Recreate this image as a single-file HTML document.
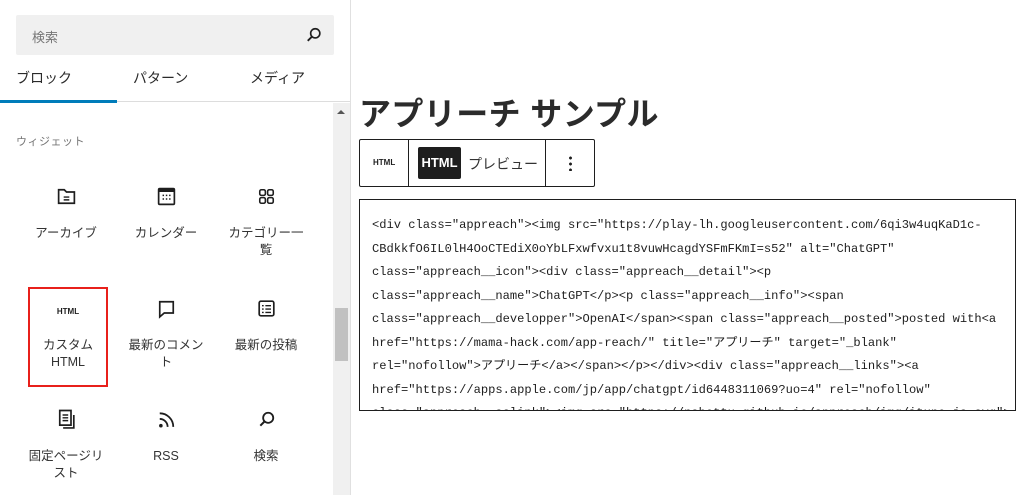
<!DOCTYPE html>
<html><head><meta charset="utf-8"><style>
*{box-sizing:border-box;margin:0;padding:0}
body{width:1024px;height:495px;overflow:hidden;background:#fff;font-family:"Liberation Sans","Noto Sans CJK JP",sans-serif;color:#1e1e1e;position:relative}
.side{position:absolute;left:0;top:0;width:351px;height:495px;border-right:1px solid #e0e0e0}
.search{position:absolute;left:16px;top:15px;width:318px;height:40px;background:#f0f0f0;border-radius:2px;font-size:13px;color:#757575;padding:12px 16px}
.tab{position:absolute;top:68px;font-size:14px;color:#2a2a2a}
.tl{position:absolute;left:0;top:101px;width:350px;height:1px;background:#ddd}
.ta{position:absolute;left:0;top:100px;width:117px;height:3px;background:#007cba}
.sb{position:absolute;left:333px;top:103px;width:17px;height:392px;background:#f0f0f0}
.thumb{position:absolute;left:335px;top:308px;width:13px;height:53px;background:#c1c1c1}
.cat{position:absolute;left:16px;top:133px;font-size:11px;color:#757575;letter-spacing:.5px}
.it{position:absolute;width:106px;text-align:center;font-size:12.5px;line-height:17px;color:#333}
.it svg{display:block;margin:0 auto}
.it .l{position:absolute;left:0;width:100%}
h1{position:absolute;left:359px;top:89px;font-size:32px;font-weight:bold;color:#2b2b2b;letter-spacing:0.4px}
.tb{position:absolute;left:359px;top:139px;width:236px;height:48px;border:1px solid #1e1e1e;border-radius:2px}
.code{position:absolute;left:359px;top:199px;width:657px;height:212px;border:1px solid #1e1e1e;overflow:hidden;font-family:"Liberation Mono","Noto Sans CJK JP",monospace;font-size:12.1px;line-height:23.5px;padding:14px 12px;color:#1e1e1e;white-space:pre}
</style></head><body>
<div class="side">
<div class="search">検索<svg style="position:absolute;right:10px;top:10px" width="20" height="20" viewBox="0 0 24 24"><circle cx="13.5" cy="10" r="5.5" fill="none" stroke="#1e1e1e" stroke-width="2"/><path d="M9.5 14L4.5 19" stroke="#1e1e1e" stroke-width="2.2"/></svg></div>
<div class="tab" style="left:16px">ブロック</div>
<div class="tab" style="left:133px">パターン</div>
<div class="tab" style="left:250px">メディア</div>
<div class="tl"></div><div class="ta"></div>
<div class="sb"></div><div class="thumb"></div>
<div style="position:absolute;left:337px;top:110px;width:0;height:0;border-left:4px solid transparent;border-right:4px solid transparent;border-bottom:4px solid #555"></div>
<div class="cat">ウィジェット</div>

<div class="it" style="left:13px;top:183px"><svg width="27" height="27" viewBox="0 0 24 24"><path d="M5 6h5l2 2h7v10H5z" fill="none" stroke="#1e1e1e" stroke-width="1.5"/><path d="M9.5 12.5h5M9.5 15h5" stroke="#1e1e1e" stroke-width="1.3"/></svg><div class="l" style="top:42px">アーカイブ</div></div>
<div class="it" style="left:113px;top:183px"><svg width="27" height="27" viewBox="0 0 24 24"><rect x="5" y="5" width="14" height="14" rx="1" fill="none" stroke="#1e1e1e" stroke-width="1.5"/><rect x="5" y="5" width="14" height="3" fill="#1e1e1e"/><path d="M8.5 11h1.3M11.4 11h1.3M14.3 11h1.3M8.5 14.2h1.3M11.4 14.2h1.3M14.3 14.2h1.3" stroke="#1e1e1e" stroke-width="1.4"/></svg><div class="l" style="top:42px">カレンダー</div></div>
<div class="it" style="left:213px;top:183px"><svg width="27" height="27" viewBox="0 0 24 24"><g fill="none" stroke="#1e1e1e" stroke-width="1.4"><rect x="6" y="6" width="5" height="5" rx="1.5"/><rect x="13" y="6" width="5" height="5" rx="1.5"/><rect x="6" y="13" width="5" height="5" rx="1.5"/><rect x="13" y="13" width="5" height="5" rx="1.5"/></g></svg><div class="l" style="top:42px">カテゴリー一<br>覧</div></div>

<div style="position:absolute;left:28px;top:287px;width:80px;height:100px;border:2px solid #e8201b"></div>
<div class="it" style="left:15px;top:303px"><div style="font-size:8px;font-weight:bold;height:14px;color:#1e1e1e">HTML</div><div class="l" style="top:34px">カスタム<br>HTML</div></div>
<div class="it" style="left:113px;top:295px"><svg width="27" height="27" viewBox="0 0 24 24"><path d="M6 6h12v10H10l-4 3.5z" fill="none" stroke="#1e1e1e" stroke-width="1.5"/></svg><div class="l" style="top:42px">最新のコメン<br>ト</div></div>
<div class="it" style="left:213px;top:295px"><svg width="27" height="27" viewBox="0 0 24 24"><rect x="5.5" y="5.5" width="13" height="13" rx="1.5" fill="none" stroke="#1e1e1e" stroke-width="1.5"/><path d="M8 9.5h1.5M11 9.5h5M8 12.5h1.5M11 12.5h5M8 15.5h1.5M11 15.5h5" stroke="#1e1e1e" stroke-width="1.3"/></svg><div class="l" style="top:42px">最新の投稿</div></div>

<div class="it" style="left:13px;top:406px"><svg width="27" height="27" viewBox="0 0 24 24"><path d="M6 4h10v13H6z" fill="none" stroke="#1e1e1e" stroke-width="1.5"/><path d="M8.5 8h5M8.5 10.5h5M8.5 13h5" stroke="#1e1e1e" stroke-width="1.3"/><path d="M18.5 8v11.5H9" fill="none" stroke="#1e1e1e" stroke-width="1.5"/></svg><div class="l" style="top:42px">固定ページリ<br>スト</div></div>
<div class="it" style="left:113px;top:406px"><svg width="27" height="27" viewBox="0 0 24 24"><circle cx="7" cy="17.5" r="1.6" fill="#1e1e1e"/><path d="M6 11.5a7 7 0 0 1 7 7M6 6.5a12 12 0 0 1 12 12" fill="none" stroke="#1e1e1e" stroke-width="1.6"/></svg><div class="l" style="top:42px">RSS</div></div>
<div class="it" style="left:213px;top:406px"><svg width="27" height="27" viewBox="0 0 24 24"><circle cx="13.5" cy="10.5" r="4.5" fill="none" stroke="#1e1e1e" stroke-width="1.6"/><path d="M10.2 13.8L6.5 17.5" stroke="#1e1e1e" stroke-width="1.8"/></svg><div class="l" style="top:42px">検索</div></div>
</div>

<h1>アプリーチ サンプル</h1>
<div class="tb">
<div style="position:absolute;left:13px;top:18px;font-size:8px;font-weight:bold">HTML</div>
<div style="position:absolute;left:48px;top:0;width:1px;height:46px;background:#1e1e1e"></div>
<div style="position:absolute;left:58px;top:7px;width:43px;height:32px;background:#1e1e1e;border-radius:2px;color:#fff;font-weight:bold;font-size:13px;text-align:center;line-height:32px">HTML</div>
<div style="position:absolute;left:108px;top:14px;font-size:14px;color:#333">プレビュー</div>
<div style="position:absolute;left:185px;top:0;width:1px;height:46px;background:#1e1e1e"></div>
<div style="position:absolute;left:209px;top:15px;width:3px;height:16px;background:radial-gradient(circle,#1e1e1e 1.3px,transparent 1.6px) 0 0/3px 6px"></div>
</div>
<div class="code">&lt;div class="appreach"&gt;&lt;img src="https://play-lh.googleusercontent.com/6qi3w4uqKaD1c-
CBdkkfO6IL0lH4OoCTEdiX0oYbLFxwfvxu1t8vuwHcagdYSFmFKmI=s52" alt="ChatGPT"
class="appreach__icon"&gt;&lt;div class="appreach__detail"&gt;&lt;p
class="appreach__name"&gt;ChatGPT&lt;/p&gt;&lt;p class="appreach__info"&gt;&lt;span
class="appreach__developper"&gt;OpenAI&lt;/span&gt;&lt;span class="appreach__posted"&gt;posted with&lt;a
href="https://mama-hack.com/app-reach/" title="アプリーチ" target="_blank"
rel="nofollow"&gt;アプリーチ&lt;/a&gt;&lt;/span&gt;&lt;/p&gt;&lt;/div&gt;&lt;div class="appreach__links"&gt;&lt;a
href="https://apps.apple.com/jp/app/chatgpt/id6448311069?uo=4" rel="nofollow"
class="appreach__aslink"&gt;&lt;img src="https://nabettu.github.io/appreach/img/itune_ja.svg"&gt;</div>
</body></html>
